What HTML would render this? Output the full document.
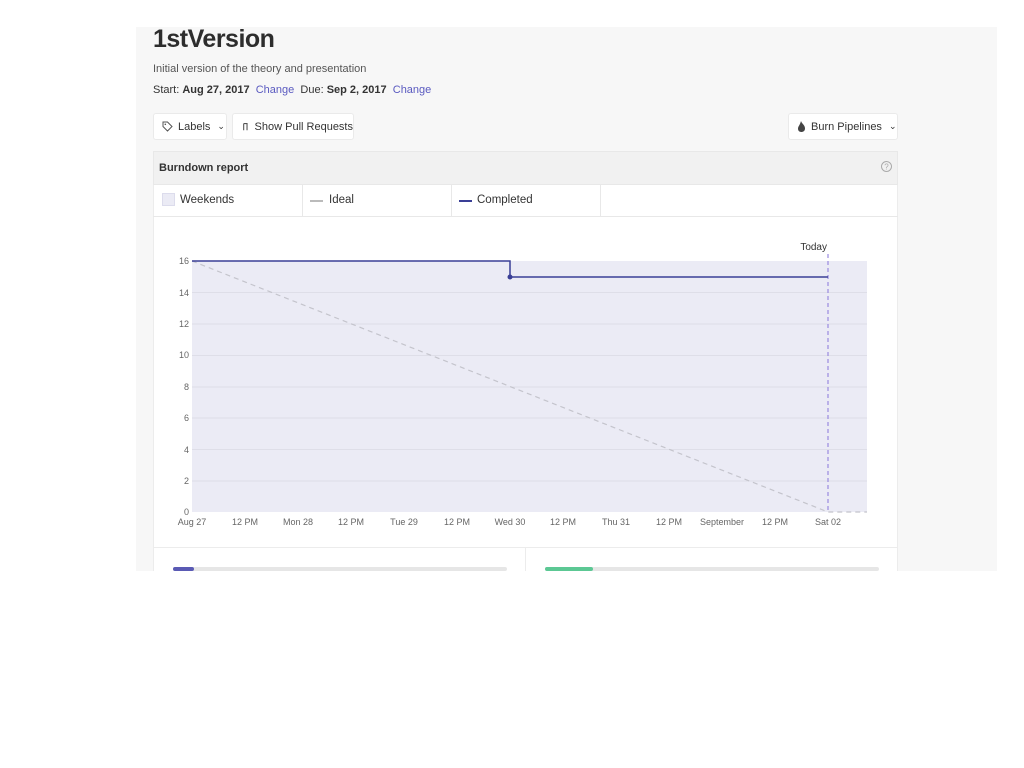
<!DOCTYPE html>
<html><head><meta charset="utf-8"><style>
*{margin:0;padding:0;box-sizing:border-box}
body{width:1024px;height:768px;background:#fff;font-family:"Liberation Sans",sans-serif;position:relative;overflow:hidden;color:#333}
.bg{position:absolute;left:136px;top:27px;width:861px;height:544px;background:#f7f7f7}
.abs{position:absolute;white-space:nowrap}
.btn{position:absolute;background:#fff;border:1px solid #eaeaea;border-radius:3px;font-size:11px;color:#333;display:flex;align-items:center;white-space:nowrap}
a{color:#5a5ac0;text-decoration:none}
</style></head><body>
<div class="bg"></div>
<div class="abs" style="left:153px;top:25px;font-size:25px;font-weight:bold;color:#2d2d2d;letter-spacing:-0.5px">1stVersion</div>
<div class="abs" style="left:153px;top:63px;font-size:11px;color:#555">Initial version of the theory and presentation</div>
<div class="abs" style="left:153px;top:84px;font-size:11px;color:#333">Start: <b>Aug 27, 2017</b>&nbsp; <a>Change</a>&nbsp; Due: <b>Sep 2, 2017</b>&nbsp; <a>Change</a></div>
<div class="btn" style="left:153px;top:113px;width:74px;height:27px;padding-left:8px"><svg width="11" height="11" viewBox="0 0 11 11" style="margin-right:5px"><path d="M1 1h4.5l4.5 4.5-4.5 4.5L1 5.5z" fill="none" stroke="#555" stroke-width="1"/><circle cx="3.3" cy="3.3" r=".8" fill="#555"/></svg>Labels<span style="margin-left:7px;font-size:9px">&#8964;</span></div>
<div class="btn" style="left:232px;top:113px;width:122px;height:27px;padding-left:9px"><svg width="9" height="11" viewBox="0 0 9 11" style="margin-right:5px"><path d="M2 10V2M2 2h4v8" fill="none" stroke="#555" stroke-width="1.3"/></svg>Show Pull Requests</div>
<div class="btn" style="left:788px;top:113px;width:110px;height:27px;padding-left:8px"><svg width="9" height="11" viewBox="0 0 9 11" style="margin-right:5px"><path d="M4 0C5 3 8 4 8 7.5 8 10 6 11 4.5 11 2 11 1 9.5 1 7.5 1 5.5 3 4 4 0z" fill="#444"/></svg>Burn Pipelines<span style="margin-left:7px;font-size:9px">&#8964;</span></div>
<div style="position:absolute;left:153px;top:151px;width:745px;height:420px;background:#fff;border:1px solid #ececec;border-bottom:none"></div>
<div style="position:absolute;left:153px;top:151px;width:745px;height:34px;background:#f1f1f1;border:1px solid #e8e8e8"></div>
<div class="abs" style="left:159px;top:162px;font-size:11px;font-weight:bold;color:#333">Burndown report</div>
<svg class="abs" style="left:880px;top:160px" width="13" height="13" viewBox="0 0 13 13"><circle cx="6.5" cy="6.5" r="5" fill="none" stroke="#aaa"/><text x="6.5" y="9.5" font-size="8" text-anchor="middle" fill="#aaa" font-family="Liberation Sans">?</text></svg>
<div style="position:absolute;left:153px;top:185px;width:745px;height:32px;border-bottom:1px solid #e8e8e8"></div>
<div style="position:absolute;left:302px;top:185px;width:1px;height:32px;background:#e8e8e8"></div>
<div style="position:absolute;left:451px;top:185px;width:1px;height:32px;background:#e8e8e8"></div>
<div style="position:absolute;left:600px;top:185px;width:1px;height:32px;background:#e8e8e8"></div>
<div style="position:absolute;left:162px;top:193px;width:13px;height:13px;background:#ebebf5;border:1px solid #dcdcec"></div>
<div class="abs" style="left:180px;top:194px;font-size:11.5px">Weekends</div>
<div style="position:absolute;left:310px;top:200px;width:13px;height:2px;background:#bbb"></div>
<div class="abs" style="left:329px;top:194px;font-size:11.5px">Ideal</div>
<div style="position:absolute;left:459px;top:200px;width:13px;height:2px;background:#3a3f96"></div>
<div class="abs" style="left:477px;top:194px;font-size:11.5px">Completed</div>
<div style="position:absolute;left:153px;top:547px;width:745px;height:1px;background:#ececec"></div>
<div style="position:absolute;left:525px;top:548px;width:1px;height:23px;background:#ececec"></div>
<div style="position:absolute;left:173px;top:567px;width:334px;height:4px;background:#e6e6e6;border-radius:2px"></div>
<div style="position:absolute;left:173px;top:567px;width:21px;height:4px;background:#5a5ab4;border-radius:2px"></div>
<div style="position:absolute;left:545px;top:567px;width:334px;height:4px;background:#e6e6e6;border-radius:2px"></div>
<div style="position:absolute;left:545px;top:567px;width:48px;height:4px;background:#5cc894;border-radius:2px"></div>
<svg class="abs" style="left:0;top:0" width="1024" height="768" font-family="Liberation Sans" font-size="9" fill="#666">
<rect x="192" y="261" width="675" height="251" fill="#ebebf5"/>
<g stroke="#dedee8" stroke-width="1">
<line x1="192" x2="867" y1="292.5" y2="292.5"/><line x1="192" x2="867" y1="324" y2="324"/><line x1="192" x2="867" y1="355.5" y2="355.5"/><line x1="192" x2="867" y1="387" y2="387"/><line x1="192" x2="867" y1="418" y2="418"/><line x1="192" x2="867" y1="449.5" y2="449.5"/><line x1="192" x2="867" y1="481" y2="481"/>
</g>
<g text-anchor="end"><text x="189" y="264">16</text><text x="189" y="296">14</text><text x="189" y="327">12</text><text x="189" y="358">10</text><text x="189" y="390">8</text><text x="189" y="421">6</text><text x="189" y="453">4</text><text x="189" y="484">2</text><text x="189" y="515">0</text></g>
<g text-anchor="middle"><text x="192" y="525">Aug 27</text><text x="245" y="525">12 PM</text><text x="298" y="525">Mon 28</text><text x="351" y="525">12 PM</text><text x="404" y="525">Tue 29</text><text x="457" y="525">12 PM</text><text x="510" y="525">Wed 30</text><text x="563" y="525">12 PM</text><text x="616" y="525">Thu 31</text><text x="669" y="525">12 PM</text><text x="722" y="525">September</text><text x="775" y="525">12 PM</text><text x="828" y="525">Sat 02</text></g>
<path d="M192 261L828 512H867" fill="none" stroke="#c4c4cc" stroke-width="1.2" stroke-dasharray="5,4"/>
<line x1="828" y1="254" x2="828" y2="512" stroke="#9a8ae0" stroke-width="1.2" stroke-dasharray="4,3"/>
<text x="827" y="250" text-anchor="end" fill="#333" font-size="10">Today</text>
<path d="M192 261H510V277H828" fill="none" stroke="#3a3f96" stroke-width="1.5"/>
<circle cx="510" cy="277" r="2.5" fill="#3a3f96"/>
</svg>
</body></html>
